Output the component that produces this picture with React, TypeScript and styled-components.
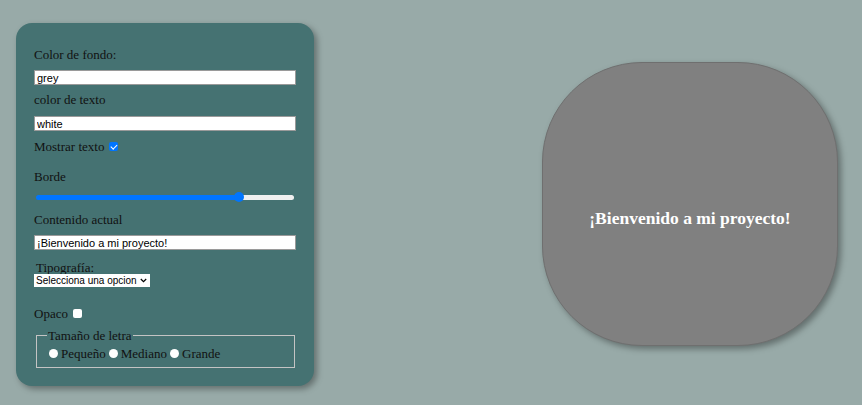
import React, { useState } from 'react'
import styled, { createGlobalStyle } from 'styled-components'

const Global = createGlobalStyle`
  html, body {
    margin: 0;
    padding: 0;
    background: #98aaa8;
  }
  body {
    font-family: "Liberation Serif", "Times New Roman", serif;
    color: #111;
  }
`

const Page = styled.div`
  display: flex;
  align-items: flex-start;
  padding: 23px 0 0 16px;
  height: 405px;
  box-sizing: border-box;
`

const Panel = styled.div`
  width: 298px;
  box-sizing: border-box;
  background: #457272;
  border-radius: 16px;
  padding: 24px 18px 18px 18px;
  box-shadow: 3px 3px 6px rgba(0, 0, 0, 0.35);
  display: flex;
  flex-direction: column;
`

const Label = styled.div<{ $mt?: number; $ml?: number }>`
  font-size: 13px;
  line-height: 15px;
  margin-top: ${p => p.$mt ?? 0}px;
  margin-left: ${p => p.$ml ?? 0}px;
  display: flex;
  align-items: center;
`

const TextInput = styled.input<{ $mt?: number }>`
  display: block;
  box-sizing: border-box;
  width: 262px;
  height: 15px;
  margin: ${p => p.$mt ?? 0}px 0 0 0;
  padding: 0 2px;
  border: 1px solid #9a9a9a;
  background: #fff;
  font-family: "Liberation Sans", Arial, sans-serif;
  font-size: 11px;
  color: #000;
  outline: none;
`

const Check = styled.input`
  appearance: none;
  width: 9px;
  height: 9px;
  margin: 0 0 0 5px;
  border-radius: 2px;
  background: #fff;
  position: relative;
  &:checked {
    background: #0075ff;
  }
  &:checked::after {
    content: '';
    position: absolute;
    left: 2.5px;
    top: 0.5px;
    width: 2.5px;
    height: 5px;
    border: solid #fff;
    border-width: 0 1.5px 1.5px 0;
    transform: rotate(45deg);
  }
`

const Range = styled.input<{ $pct: number }>`
  appearance: none;
  width: 258px;
  height: 12px;
  margin: 7px 0 0 2px;
  background: transparent;
  &::-webkit-slider-runnable-track {
    height: 5px;
    border-radius: 3px;
    background: linear-gradient(
      to right,
      #0075ff 0%,
      #0075ff ${p => p.$pct}%,
      #efefef ${p => p.$pct}%,
      #efefef 100%
    );
  }
  &::-webkit-slider-thumb {
    appearance: none;
    width: 10px;
    height: 10px;
    margin-top: -2.5px;
    border-radius: 50%;
    background: #0075ff;
  }
`

const Select = styled.select`
  appearance: none;
  display: block;
  width: 116px;
  height: 13px;
  margin: -1px 0 0 0;
  padding: 0 11px 0 2px;
  border: none;
  background: #fff
    url("data:image/svg+xml;utf8,<svg xmlns='http://www.w3.org/2000/svg' width='7' height='5' viewBox='0 0 7 5'><path d='M0.8 1 L3.5 3.7 L6.2 1' fill='none' stroke='black' stroke-width='1.2'/></svg>")
    no-repeat right 3px center;
  font-family: "Liberation Sans", Arial, sans-serif;
  font-size: 10px;
  line-height: 13px;
  color: #000;
  outline: none;
`

const Fieldset = styled.fieldset`
  margin: 7px 0 0 2px;
  padding: 0 10px 6px 10px;
  width: 259px;
  box-sizing: border-box;
  border: 1px solid #c4c4c4;
  font-size: 13px;
  line-height: 15px;
`

const Legend = styled.legend`
  padding: 0 1px;
  font-size: 13px;
`

const Radios = styled.div`
  display: flex;
  align-items: center;
  margin-top: 3px;
`

const Radio = styled.input<{ $first?: boolean }>`
  appearance: none;
  width: 9px;
  height: 9px;
  margin: 0 3px 0 ${p => (p.$first ? 2 : 3)}px;
  border-radius: 50%;
  background: #fff;
`

const Preview = styled.div<{ $bg: string; $color: string; $radius: number }>`
  margin: 39px 0 0 228px;
  width: 296px;
  height: 284px;
  box-sizing: border-box;
  border: 1px solid #6f6f6f;
  border-radius: ${p => p.$radius}px;
  background: ${p => p.$bg};
  color: ${p => p.$color};
  box-shadow: 3px 3px 6px rgba(0, 0, 0, 0.35);
  display: flex;
  align-items: center;
  justify-content: center;
  padding-top: 29px;
`

const Title = styled.h2`
  margin: 0;
  font-size: 17.5px;
  font-weight: bold;
`

export default function App() {
  const [bg, setBg] = useState('grey')
  const [color, setColor] = useState('white')
  const [show, setShow] = useState(true)
  const [border, setBorder] = useState(80)
  const [text, setText] = useState('¡Bienvenido a mi proyecto!')
  const [opaque, setOpaque] = useState(false)

  return (
    <>
      <Global />
      <Page>
        <Panel>
          <Label>Color de fondo:</Label>
          <TextInput $mt={8} value={bg} onChange={e => setBg(e.target.value)} />
          <Label $mt={7}>color de texto</Label>
          <TextInput $mt={9} value={color} onChange={e => setColor(e.target.value)} />
          <Label $mt={8}>
            Mostrar texto
            <Check type="checkbox" checked={show} onChange={e => setShow(e.target.checked)} />
          </Label>
          <Label $mt={15}>Borde</Label>
          <Range
            type="range"
            min={0}
            max={100}
            value={border}
            $pct={border}
            onChange={e => setBorder(Number(e.target.value))}
          />
          <Label $mt={9}>Contenido actual</Label>
          <TextInput $mt={8} value={text} onChange={e => setText(e.target.value)} />
          <Label $mt={10} $ml={2}>Tipografía:</Label>
          <Select defaultValue="">
            <option value="">Selecciona una opcion</option>
            <option value="serif">Serif</option>
            <option value="sans">Sans</option>
          </Select>
          <Label $mt={19}>
            Opaco
            <Check type="checkbox" checked={opaque} onChange={e => setOpaque(e.target.checked)} />
          </Label>
          <Fieldset>
            <Legend>Tamaño de letra</Legend>
            <Radios>
              <Radio type="radio" name="size" $first />Pequeño
              <Radio type="radio" name="size" />Mediano
              <Radio type="radio" name="size" />Grande
            </Radios>
          </Fieldset>
        </Panel>
        <Preview $bg={bg} $color={color} $radius={border + 20} style={{ opacity: opaque ? 0.5 : 1 }}>
          {show && <Title>{text}</Title>}
        </Preview>
      </Page>
    </>
  )
}
